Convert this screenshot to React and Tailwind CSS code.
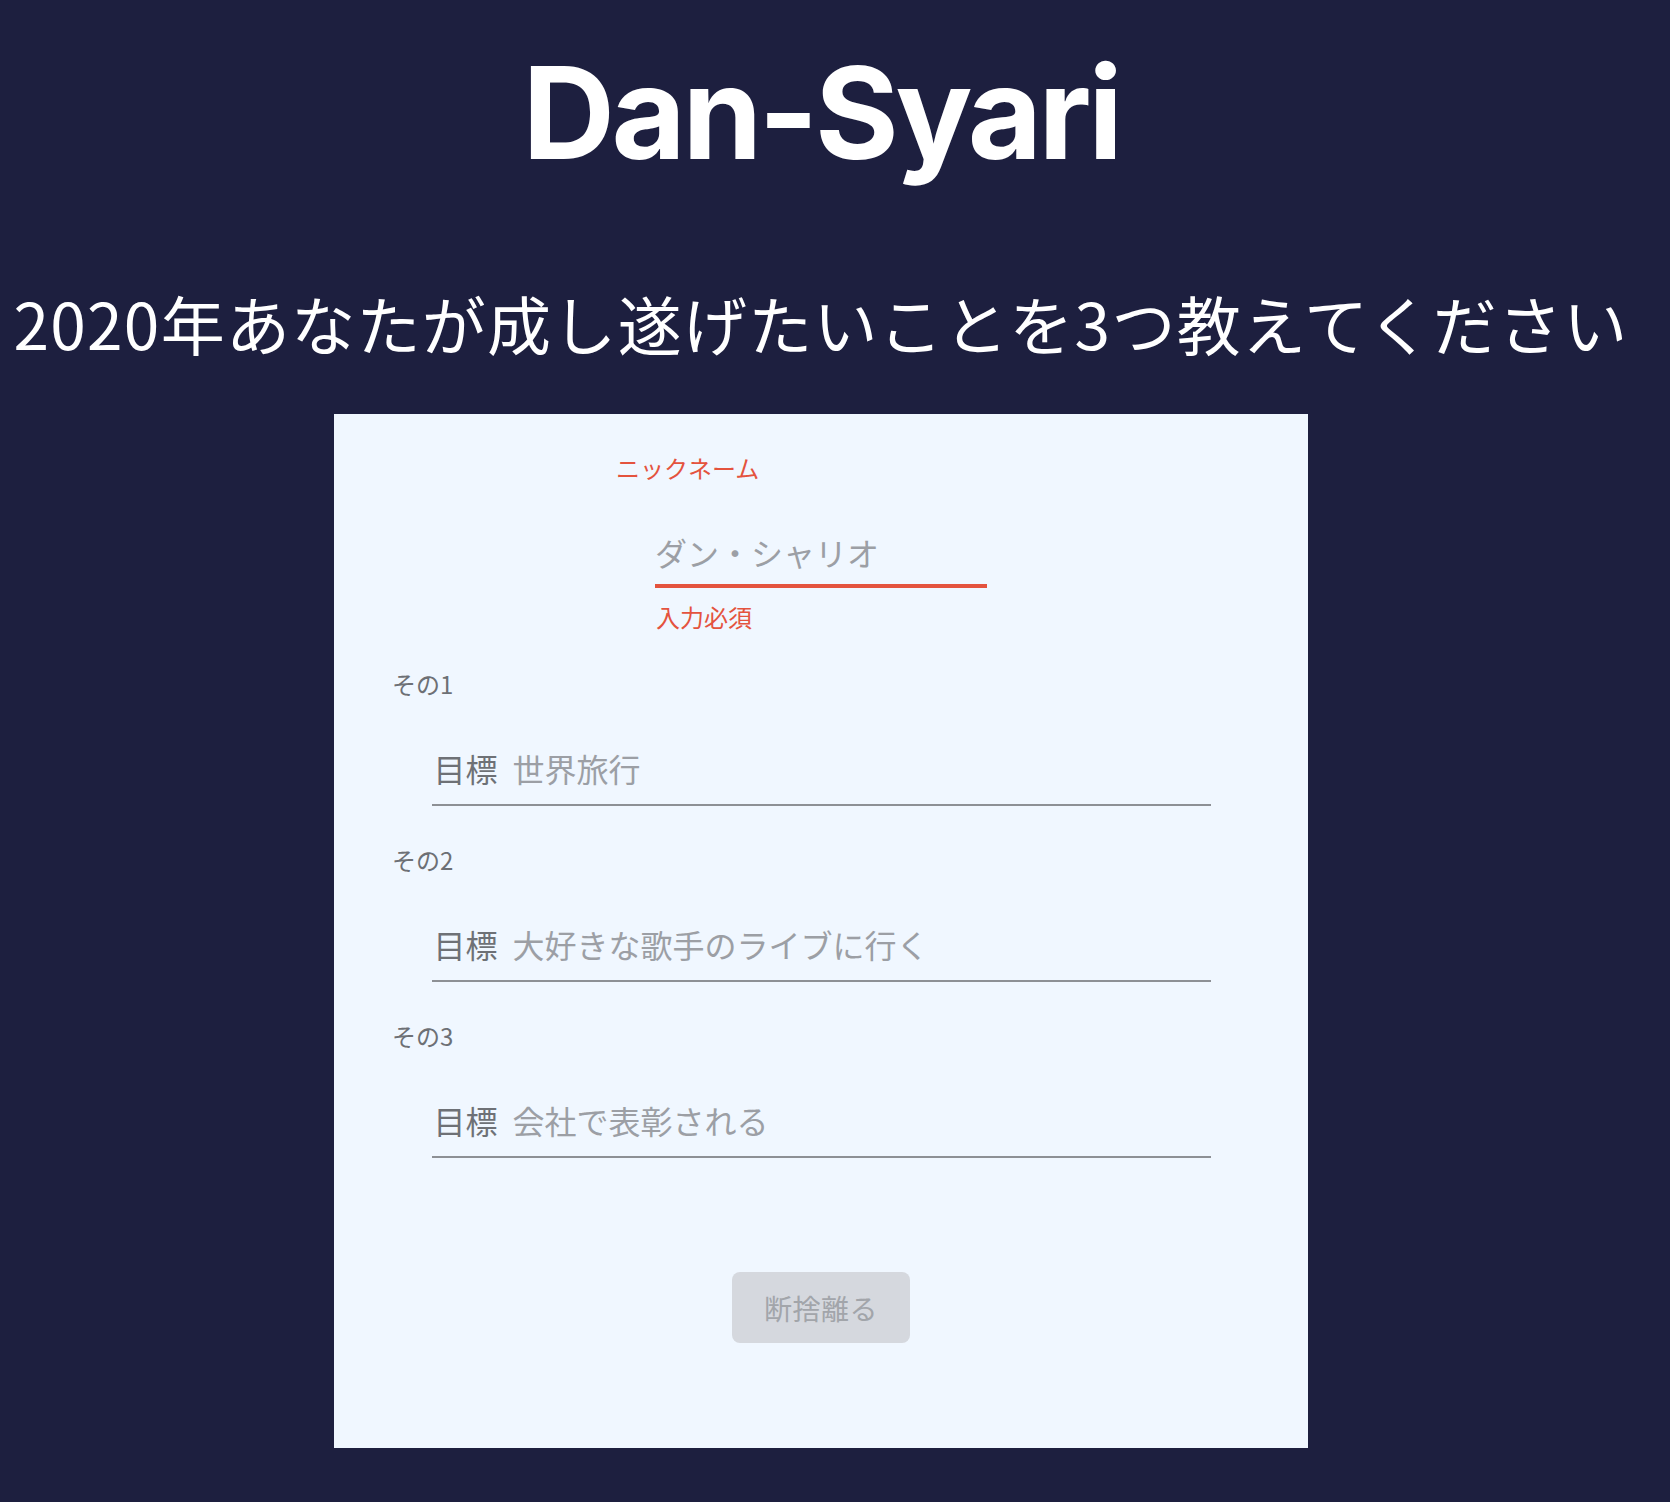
import { useState } from 'react';

const goals = [
  { label: 'その1', placeholder: '世界旅行' },
  { label: 'その2', placeholder: '大好きな歌手のライブに行く' },
  { label: 'その3', placeholder: '会社で表彰される' },
];

const jp = { fontFamily: '"Noto Sans CJK JP", "Noto Sans", sans-serif' };

function GoalField({ label, placeholder, first }) {
  return (
    <div className={first ? 'mt-[35px]' : 'mt-[38px]'}>
      <div className="pl-[58px] text-[24px] leading-[32px] text-[#6d7075]">{label}</div>
      {/* underline input with 目標 adornment */}
      <div className="mt-[44px] mx-auto w-[779px] flex items-center pl-[2px] pb-[12px] border-b-2 border-[#8d9095]">
        <span className="text-[32px] leading-[48px] text-[#6e7176] mr-[15px] shrink-0">目標</span>
        <input
          className="flex-1 bg-transparent outline-none text-[32px] leading-[48px] h-[48px] text-[#333] placeholder:text-[#9c9fa5]"
          style={jp}
          placeholder={placeholder}
        />
      </div>
    </div>
  );
}

export default function App() {
  const [nickname, setNickname] = useState('');

  return (
    <div className="min-h-[1502px] w-full bg-[#1d1f3f]" style={jp}>
      <div className="w-[1642px] flex flex-col items-center">
        <h1
          className="pt-[49px] text-[128px] leading-none font-bold text-white tracking-[-0.027em]"
          style={{ fontFamily: 'Inter, "Noto Sans", sans-serif' }}
        >
          Dan-Syari
        </h1>

        <p className="mt-[113px] text-[64px] leading-[64px] text-white whitespace-nowrap tracking-[0.02em]">
          2020年あなたが成し遂げたいことを3つ教えてください
        </p>

        <div className="mt-[60px] w-[974px] h-[1034px] bg-[#f0f7ff] flex flex-col pt-[38px]">
          {/* Nickname */}
          <div className="pl-[282px] text-[24px] leading-[32px] text-[#e4533e]">ニックネーム</div>
          <div className="mt-[44px] mx-auto w-[332px] pb-[8px] border-b-4 border-[#e4533e]">
            <input
              className="w-full bg-transparent outline-none text-[32px] leading-[48px] h-[48px] text-[#333] placeholder:text-[#9c9fa5]"
              style={jp}
              placeholder="ダン・シャリオ"
              value={nickname}
              onChange={(e) => setNickname(e.target.value)}
            />
          </div>
          <div className="mt-[13px] pl-[322px] text-[24px] leading-[32px] text-[#e4533e]">入力必須</div>

          {goals.map((g, i) => (
            <GoalField key={g.label} label={g.label} placeholder={g.placeholder} first={i === 0} />
          ))}

          <div className="mt-[114px] flex justify-center">
            <button
              disabled
              className="w-[178px] h-[71px] rounded-[8px] bg-[#d5d8de] text-[28px] text-[#a2a5aa] tracking-[0.02em]"
              style={jp}
            >
              断捨離る
            </button>
          </div>
        </div>
      </div>
    </div>
  );
}
